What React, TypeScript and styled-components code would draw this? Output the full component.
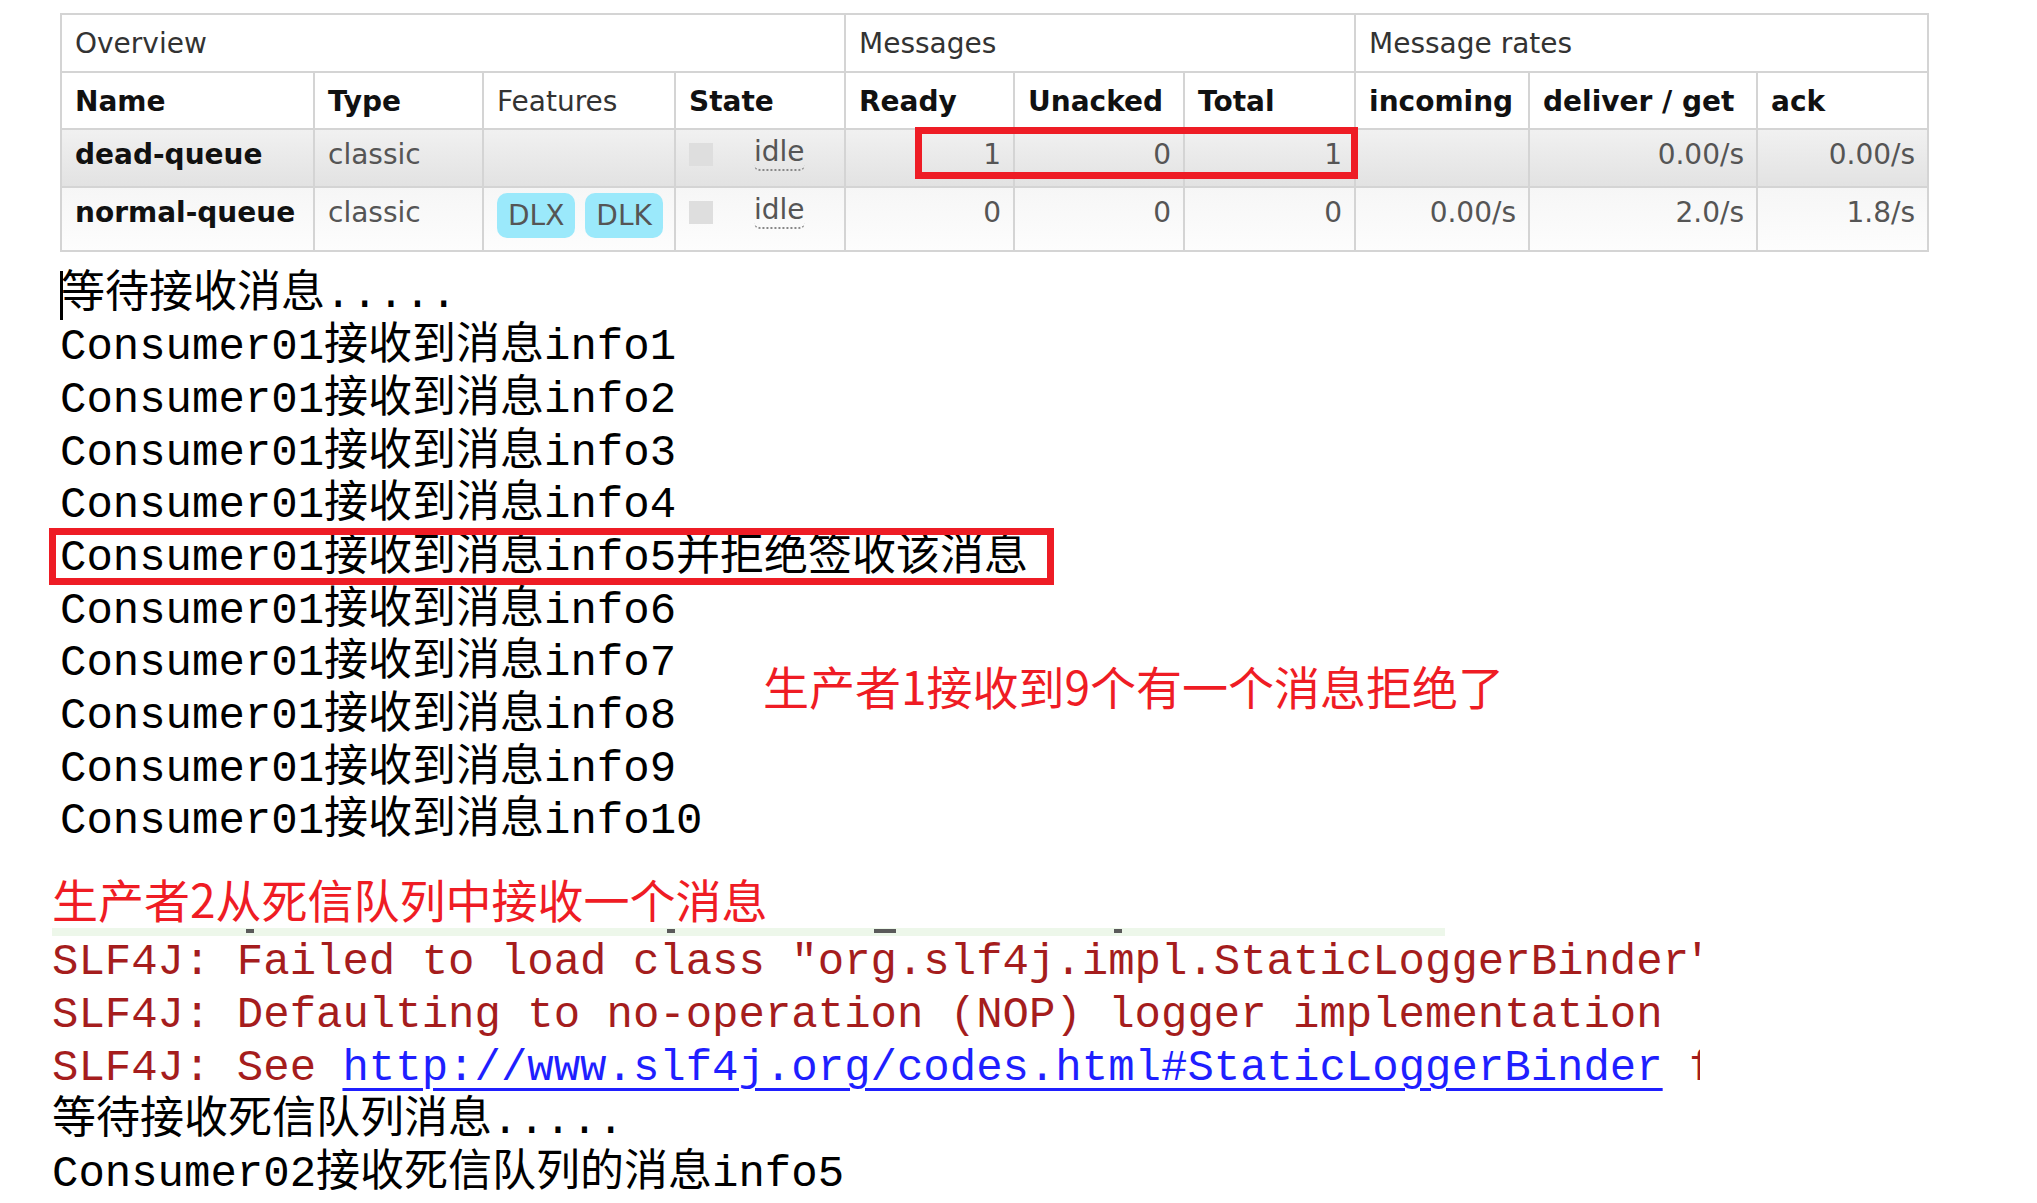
import React from 'react';
import styled, { createGlobalStyle, css } from 'styled-components';

const GlobalStyle = createGlobalStyle`
  html, body {
    margin: 0;
    padding: 0;
    background: #fff;
  }
  body {
    font-family: "DejaVu Sans", Verdana, sans-serif;
  }
`;

const Page = styled.div`
  width: 2037px;
  min-height: 1203px;
  padding-top: 13px;
  box-sizing: border-box;
  overflow: hidden;
`;

// ---------- queue table ----------

const TableWrap = styled.div`
  position: relative;
  margin-left: 60px;
  width: 1867px;
`;

const QueueTable = styled.table`
  width: 1867px;
  table-layout: fixed;
  border-collapse: collapse;
  font-family: "DejaVu Sans", Verdana, sans-serif;
  font-size: 28px;
  color: #555;
`;

const Row = styled.tr<{ $h: number; $tone?: 'head' | 'grey' | 'light' }>`
  height: ${p => p.$h}px;
  background: ${p =>
    p.$tone === 'grey'
      ? 'linear-gradient(#f1f1f1, #e2e2e2)'
      : p.$tone === 'light'
      ? 'linear-gradient(#f6f6f6, #fdfdfd)'
      : '#fff'};
`;

const Cell = styled.td<{ $right?: boolean; $strong?: boolean }>`
  border: 2px solid #d4d4d4;
  padding: 5px 12px 0 13px;
  vertical-align: top;
  line-height: 40px;
  white-space: nowrap;
  overflow: hidden;
  text-align: ${p => (p.$right ? 'right' : 'left')};
  font-weight: ${p => (p.$strong ? 700 : 400)};
  color: ${p => (p.$strong ? '#111' : '#555')};
`;

const HeadCell = styled.th<{ $strong?: boolean }>`
  border: 2px solid #d4d4d4;
  padding: 9px 12px 0 13px;
  vertical-align: top;
  line-height: 40px;
  text-align: left;
  white-space: nowrap;
  font-weight: ${p => (p.$strong ? 700 : 400)};
  color: ${p => (p.$strong ? '#111' : '#333')};
`;

const Badge = styled.span`
  display: inline-block;
  vertical-align: top;
  height: 45px;
  line-height: 45px;
  padding: 0 11px;
  margin-right: 10px;
  border-radius: 10px;
  background: #9be9fb;
  color: #555;
`;

const StateDot = styled.span`
  display: inline-block;
  vertical-align: top;
  width: 24px;
  height: 23px;
  margin-top: 8px;
  background: #dedede;
`;

const StateText = styled.abbr`
  display: inline-block;
  vertical-align: top;
  margin-left: 41px;
  line-height: 34px;
  text-decoration: none;
  border-bottom: 2px dotted #888;
  border-radius: 0 0 6px 6px;
`;

const TableMark = styled.div`
  position: absolute;
  left: 855px;
  top: 114px;
  width: 443px;
  height: 52px;
  box-sizing: border-box;
  border: 7px solid #ee1c25;
`;

// ---------- console output ----------

const Console = styled.div<{ $left: number; $top: number; $clip?: number }>`
  margin-left: ${p => p.$left}px;
  margin-top: ${p => p.$top}px;
  font-family: "Liberation Mono", "Noto Sans CJK SC", monospace;
  font-size: 44px;
  color: #000;
  ${p =>
    p.$clip &&
    css`
      width: ${p.$clip}px;
      overflow: hidden;
    `}
`;

const Line = styled.div<{ $h: number; $boxed?: boolean; $error?: boolean }>`
  position: relative;
  height: ${p => p.$h}px;
  line-height: ${p => p.$h}px;
  white-space: pre;
  color: ${p => (p.$error ? '#a51d1d' : '#000')};
  ${p =>
    p.$boxed &&
    css`
      &::after {
        content: '';
        position: absolute;
        left: -11px;
        top: -4px;
        width: 1005px;
        height: 57px;
        box-sizing: border-box;
        border: 7px solid #ee1c25;
      }
    `}
`;

const Caret = styled.span`
  display: inline-block;
  position: relative;
  top: 2px;
  vertical-align: top;
  width: 3px;
  height: 49px;
  margin-right: -2px;
  background: #000;
`;

const Link = styled.span`
  color: #1f1fff;
  text-decoration: underline;
  text-decoration-thickness: 3px;
  text-underline-offset: 8px;
`;

const LowerRow = styled.div`
  display: flex;
  align-items: flex-start;
`;

const LineColumn = styled.div`
  width: 703px;
  flex: none;
`;

const Note = styled.div<{ $top: number }>`
  margin-top: ${p => p.$top}px;
  font-family: "Noto Sans CJK SC", "Noto Sans", sans-serif;
  font-size: 46px;
  line-height: 46px;
  color: #ef1c24;
  white-space: nowrap;
`;

const Strip = styled.div`
  position: relative;
  margin-top: 7px;
  width: 1393px;
  height: 8px;
  background: #edf7ea;
`;

const StripMark = styled.span<{ $x: number; $w: number }>`
  position: absolute;
  top: 1px;
  left: ${p => p.$x}px;
  width: ${p => p.$w}px;
  height: 4px;
  background: #5a5a5a;
`;

const columns = [253, 169, 192, 170, 169, 170, 171, 174, 228, 171];

const received = [1, 2, 3, 4, 5, 6, 7, 8, 9, 10].map(n =>
  n === 5 ? `Consumer01接收到消息info${n}并拒绝签收该消息` : `Consumer01接收到消息info${n}`
);

const App: React.FC = () => {
  return (
    <Page>
      <GlobalStyle />
      <TableWrap>
        <QueueTable>
          <colgroup>
            {columns.map((w, i) => (
              <col key={i} style={{ width: w }} />
            ))}
          </colgroup>
          <thead>
            <Row $h={58} $tone="head">
              <HeadCell colSpan={4}>Overview</HeadCell>
              <HeadCell colSpan={3}>Messages</HeadCell>
              <HeadCell colSpan={3}>Message rates</HeadCell>
            </Row>
            <Row $h={57} $tone="head">
              <HeadCell $strong>Name</HeadCell>
              <HeadCell $strong>Type</HeadCell>
              <HeadCell>Features</HeadCell>
              <HeadCell $strong>State</HeadCell>
              <HeadCell $strong>Ready</HeadCell>
              <HeadCell $strong>Unacked</HeadCell>
              <HeadCell $strong>Total</HeadCell>
              <HeadCell $strong>incoming</HeadCell>
              <HeadCell $strong>deliver / get</HeadCell>
              <HeadCell $strong>ack</HeadCell>
            </Row>
          </thead>
          <tbody>
            <Row $h={58} $tone="grey">
              <Cell $strong>dead-queue</Cell>
              <Cell>classic</Cell>
              <Cell />
              <Cell>
                <StateDot />
                <StateText title="idle">idle</StateText>
              </Cell>
              <Cell $right>1</Cell>
              <Cell $right>0</Cell>
              <Cell $right>1</Cell>
              <Cell $right />
              <Cell $right>0.00/s</Cell>
              <Cell $right>0.00/s</Cell>
            </Row>
            <Row $h={64} $tone="light">
              <Cell $strong>normal-queue</Cell>
              <Cell>classic</Cell>
              <Cell>
                <Badge>DLX</Badge>
                <Badge>DLK</Badge>
              </Cell>
              <Cell>
                <StateDot />
                <StateText title="idle">idle</StateText>
              </Cell>
              <Cell $right>0</Cell>
              <Cell $right>0</Cell>
              <Cell $right>0</Cell>
              <Cell $right>0.00/s</Cell>
              <Cell $right>2.0/s</Cell>
              <Cell $right>1.8/s</Cell>
            </Row>
          </tbody>
        </QueueTable>
        <TableMark />
      </TableWrap>

      <Console $left={60} $top={16.5}>
        <Line $h={52.7}>
          <Caret />
          等待接收消息.....
        </Line>
        {received.slice(0, 5).map((text, i) => (
          <Line key={i} $h={52.7} $boxed={i === 4}>
            {text}
          </Line>
        ))}
        <LowerRow>
          <LineColumn>
            {received.slice(5).map((text, i) => (
              <Line key={i} $h={52.7}>
                {text}
              </Line>
            ))}
          </LineColumn>
          <Note $top={77}>生产者1接收到9个有一个消息拒绝了</Note>
        </LowerRow>
      </Console>

      <Console $left={52} $top={27} $clip={1648}>
        <Note $top={0}>生产者2从死信队列中接收一个消息</Note>
        <Strip>
          <StripMark $x={194} $w={8} />
          <StripMark $x={615} $w={8} />
          <StripMark $x={822} $w={22} />
          <StripMark $x={1062} $w={8} />
        </Strip>
        <Line $h={53} $error>SLF4J: Failed to load class "org.slf4j.impl.StaticLoggerBinder".</Line>
        <Line $h={53} $error>SLF4J: Defaulting to no-operation (NOP) logger implementation</Line>
        <Line $h={53} $error>
          SLF4J: See <Link>http://www.slf4j.org/codes.html#StaticLoggerBinder</Link> for further details.
        </Line>
        <Line $h={53}>等待接收死信队列消息.....</Line>
        <Line $h={53}>Consumer02接收死信队列的消息info5</Line>
      </Console>
    </Page>
  );
};

export default App;
